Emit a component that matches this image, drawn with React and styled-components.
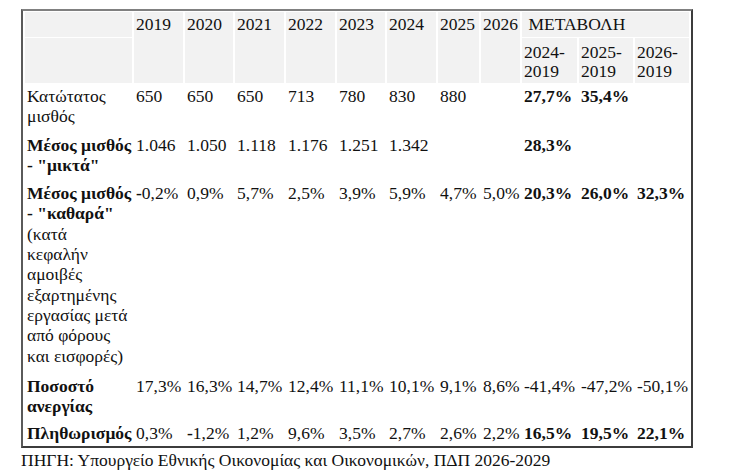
import React from 'react';
import styled, { createGlobalStyle } from 'styled-components';

const GlobalStyle = createGlobalStyle`
  body {
    margin: 0;
    background: #fff;
  }
`;

const COLS = [107, 49, 48, 49, 49, 48, 49, 41, 39, 55, 54, 54];
const YEARS = ['2019', '2020', '2021', '2022', '2023', '2024', '2025', '2026'];

// '*' = bold value, '~' = bold minus sign; pb = bottom padding of the row
const ROWS = [
  {
    pb: 5,
    label: [['Κατώτατος', false], ['μισθός', false]],
    values: ['650', '650', '650', '713', '780', '830', '880', '', '*27,7%', '*35,4%', ''],
  },
  {
    pb: 5,
    label: [['Μέσος μισθός', true], ['- "μικτά"', true]],
    values: ['1.046', '1.050', '1.118', '1.176', '1.251', '1.342', '', '', '*28,3%', '', ''],
  },
  {
    pb: 7,
    label: [
      ['Μέσος μισθός', true],
      ['- "καθαρά"', true],
      ['(κατά', false],
      ['κεφαλήν', false],
      ['αμοιβές', false],
      ['εξαρτημένης', false],
      ['εργασίας μετά', false],
      ['από φόρους', false],
      ['και εισφορές)', false],
    ],
    values: ['~-0,2%', '0,9%', '5,7%', '2,5%', '3,9%', '5,9%', '4,7%', '5,0%', '*20,3%', '*26,0%', '*32,3%'],
  },
  {
    pb: 4,
    label: [['Ποσοστό', true], ['ανεργίας', true]],
    values: ['17,3%', '16,3%', '14,7%', '12,4%', '11,1%', '10,1%', '9,1%', '8,6%', '-41,4%', '-47,2%', '-50,1%'],
  },
  {
    pb: 1,
    label: [['Πληθωρισμός', true]],
    values: ['0,3%', '~-1,2%', '1,2%', '9,6%', '3,5%', '2,7%', '2,6%', '2,2%', '*16,5%', '*19,5%', '*22,1%'],
  },
];

function App() {
  return (
    <Page>
      <GlobalStyle />
      <Table>
        <colgroup>
          {COLS.map((w, i) => (
            <Col key={i} $w={w} />
          ))}
        </colgroup>
        <thead>
          <tr>
            <HeadCell />
            {YEARS.map((y) => (
              <HeadCell key={y} rowSpan={2}>{y}</HeadCell>
            ))}
            <HeadCell colSpan={3}>{'\u00a0'}ΜΕΤΑΒΟΛΗ</HeadCell>
          </tr>
          <tr>
            <HeadCell $sub />
            <HeadCell $sub>2024-<br />2019</HeadCell>
            <HeadCell $sub>2025-<br />2019</HeadCell>
            <HeadCell $sub>2026-<br />2019</HeadCell>
          </tr>
        </thead>
        <tbody>
          {ROWS.map((row, i) => (
            <tr key={i}>
              <Label $pb={row.pb}>
                {row.label.map(([t, b], j) => (
                  <Line key={j} $bold={b}>{t}</Line>
                ))}
              </Label>
              {row.values.map((v, j) => {
                if (v.startsWith('*')) {
                  return <Cell key={j} $pb={row.pb} $bold>{v.slice(1)}</Cell>;
                }
                if (v.startsWith('~')) {
                  return (
                    <Cell key={j} $pb={row.pb}>
                      <Strong>-</Strong>
                      {v.slice(2)}
                    </Cell>
                  );
                }
                return <Cell key={j} $pb={row.pb}>{v}</Cell>;
              })}
            </tr>
          ))}
        </tbody>
      </Table>
      <Source>ΠΗΓΗ: Υπουργείο Εθνικής Οικονομίας και Οικονομικών, ΠΔΠ 2026-2029</Source>
    </Page>
  );
}

export default App;

const Page = styled.div`
  padding: 9px 0 0 21px;
  font-family: "Liberation Serif", serif;
  font-size: 17.5px;
  color: #111;
`;

const Table = styled.table`
  table-layout: fixed;
  width: 672px;
  border-collapse: separate;
  border-spacing: 2px 1px;
  border-style: solid;
  border-width: 2px;
  border-color: #808080 #3c3c3c #3c3c3c #5a5a5a;
  font-family: "Liberation Serif", serif;
  font-size: 17.5px;
`;

const Col = styled.col`
  width: ${(p) => p.$w}px;
`;

const HeadCell = styled.th`
  background: #f2f2f2;
  font-family: "Liberation Serif", serif;
  font-size: 17.5px;
  font-weight: normal;
  color: #111;
  text-align: left;
  vertical-align: top;
  padding: ${(p) => (p.$sub ? '5px 2px 2px' : '3px 2px')};
  line-height: 19px;
  white-space: nowrap;
`;

const Label = styled.td`
  font-family: "Liberation Serif", serif;
  font-size: 17.5px;
  color: #111;
  vertical-align: top;
  padding: 2px 2px ${(p) => p.$pb}px;
  line-height: 20.3px;
  white-space: nowrap;
`;

const Line = styled.div`
  font-family: "Liberation Serif", serif;
  font-weight: ${(p) => (p.$bold ? 'bold' : 'normal')};
`;

const Cell = styled.td`
  font-family: "Liberation Serif", serif;
  font-size: 17.5px;
  color: #111;
  vertical-align: top;
  padding: 2px 2px ${(p) => p.$pb}px;
  line-height: 20.3px;
  white-space: nowrap;
  font-weight: ${(p) => (p.$bold ? 'bold' : 'normal')};
`;

const Strong = styled.b`
  font-weight: bold;
`;

const Source = styled.div`
  font-family: "Liberation Serif", serif;
  font-size: 17.5px;
  color: #111;
  line-height: 20px;
  margin-top: 2px;
`;
